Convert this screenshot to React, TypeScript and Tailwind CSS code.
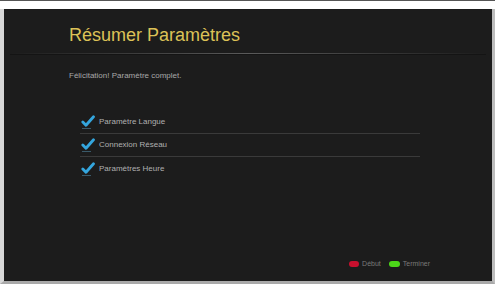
import React from 'react';

const items = ['Paramètre Langue', 'Connexion Réseau', 'Paramètres Heure'];

function Check() {
  return (
    <div className="relative w-[14px] h-[14px] shrink-0">
      <svg width="14" height="13" viewBox="0 0 14 13" className="absolute left-0 top-0">
        <path d="M1.8 7 L5 10.3 L12.5 1.8" fill="none" stroke="#34a6de" strokeWidth="2.8" strokeLinecap="round" strokeLinejoin="round" />
      </svg>
      <div className="absolute left-[1px] bottom-0 w-[9px] h-px bg-[#3a5a6a]" />
    </div>
  );
}

export default function App() {
  return (
    <div className="w-[495px] h-[284px] bg-white flex flex-col overflow-hidden" style={{ fontFamily: '"Liberation Sans", Arial, sans-serif' }}>
      <div className="h-px bg-[#555] w-full" />
      <div className="flex-1 flex mt-[8px] border-l-[4px] border-l-[#d8d8d8] border-r-[3px] border-r-[#bdbdbd] border-b-[3px] border-b-[#a9a9a9]">
        <div className="flex-1 bg-[#1c1c1c] flex flex-col relative">
          <div className="pl-[65px] pt-[15px] h-[44px]">
            <h1 className="text-[#dcc257] text-[18px] leading-[22px]">Résumer Paramètres</h1>
          </div>
          <div className="h-px mx-[6px] bg-gradient-to-r from-transparent via-[#5a5a5a] to-transparent" />
          <div className="h-px mx-[6px] bg-[#141414]" />
          <p className="pl-[65px] mt-[16px] text-[#a8a8a8] text-[8px] leading-[10px]">Félicitation! Paramètre complet.</p>
          <div className="ml-[76px] mr-[72px] mt-[30px] flex flex-col">
            {items.map((t, i) => (
              <div key={t} className={`h-[23px] flex items-center gap-[4px] pl-[1px] ${i < items.length - 1 ? 'border-b border-[#3a3a3a]' : ''}`}>
                <Check />
                <span className="text-[#b0b0b0] text-[8px] leading-[10px]">{t}</span>
              </div>
            ))}
          </div>
          <div className="flex-1" />
          <div className="flex justify-end items-center pr-[62px] pb-[12px] gap-[8px] text-[7px] text-[#7a7a7a]">
            <div className="flex items-center gap-[3px]">
              <div className="w-[10px] h-[6px] rounded-full bg-[#c8102e]" />
              <span>Début</span>
            </div>
            <div className="flex items-center gap-[3px]">
              <div className="w-[11px] h-[6px] rounded-full bg-[#4cd619]" />
              <span>Terminer</span>
            </div>
          </div>
        </div>
      </div>
    </div>
  );
}
